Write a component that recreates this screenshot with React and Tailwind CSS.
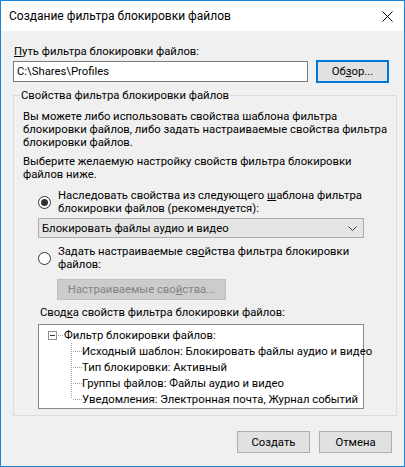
import React from 'react';

const Radio = ({ checked }) => (
  <div className="w-[13px] h-[13px] shrink-0 rounded-full border border-[#333333] bg-white flex items-center justify-center">
    {checked && <div className="w-[7px] h-[7px] rounded-full bg-[#333333]" />}
  </div>
);

const WinButton = ({ children, primary, disabled, className = '' }) => (
  <div
    className={
      'flex items-center justify-center ' +
      (disabled
        ? 'bg-[#cccccc] border border-[#bfbfbf] text-[#838383] '
        : primary
        ? 'bg-[#e1e1e1] border-2 border-[#0078d7] '
        : 'bg-[#e1e1e1] border border-[#adadad] ') +
      className
    }
  >
    {children}
  </div>
);

const Branch = ({ last }) => (
  <svg width="11" height="16" className="shrink-0" shapeRendering="crispEdges">
    <line x1="0.5" y1="0" x2="0.5" y2={last ? 8 : 16} stroke="#a0a0a0" strokeDasharray="1 1" />
    <line x1="2" y1="8.5" x2="11" y2="8.5" stroke="#a0a0a0" strokeDasharray="1 1" />
  </svg>
);

const App = () => {
  const children = [
    'Исходный шаблон: Блокировать файлы аудио и видео',
    'Тип блокировки: Активный',
    'Группы файлов: Файлы аудио и видео',
    'Уведомления: Электронная почта, Журнал событий',
  ];

  return (
    <div className="w-[405px] h-[467px] border border-[#1883d7] bg-[#f0f0f0] flex flex-col font-['Roboto','Liberation_Sans',sans-serif] text-[11.3px] leading-[13px] text-black">
      <div className="h-[30px] shrink-0 bg-white flex items-center justify-between pl-[8px] pr-[11px]">
        <span className="whitespace-nowrap text-[12px]">Создание фильтра блокировки файлов</span>
        <svg width="11" height="11" viewBox="0 0 11 11">
          <path d="M0.5 0.5 L10.5 10.5 M10.5 0.5 L0.5 10.5" stroke="#000" strokeWidth="1" />
        </svg>
      </div>

      <div className="flex flex-col px-[12px]">
        <div className="mt-[14px] pl-[1px] whitespace-nowrap">
          <u>П</u>уть фильтра блокировки файлов:
        </div>
        <div className="mt-[2px] flex items-center gap-[8px]">
          <div className="w-[295px] h-[21px] bg-white border border-[#7a7a7a] flex items-center pl-[3px] whitespace-nowrap">
            C:\Shares\Profiles
          </div>
          <WinButton primary className="w-[73px] h-[23px]">
            Об<u>з</u>ор...
          </WinButton>
        </div>

        <fieldset className="mt-[6px] border border-[#dcdcdc] px-[9px] pt-[8px] pb-[6px]">
          <legend className="-ml-[3px] px-[1px] whitespace-nowrap">Свойства фильтра блокировки файлов</legend>
          <div className="whitespace-nowrap">
            Вы можете либо использовать свойства шаблона фильтра
            <br />
            блокировки файлов, либо задать настраиваемые свойства фильтра
            <br />
            блокировки файлов.
          </div>
          <div className="mt-[6px] whitespace-nowrap">
            Выберите желаемую настройку свойств фильтра блокировки
            <br />
            файлов ниже.
          </div>

          <div className="mt-[8px] ml-[15px] flex items-center gap-[7px]">
            <Radio checked />
            <div className="whitespace-nowrap">
              Наследовать свойства из следующего <u>ш</u>аблона фильтра
              <br />
              блокировки файлов (рекомендуется):
            </div>
          </div>

          <div className="mt-[3px] ml-[15px] w-[326px] h-[20px] bg-[#e5e5e5] border border-[#acacac] flex items-center justify-between pl-[3px] pr-[6px]">
            <span className="whitespace-nowrap">Блокировать файлы аудио и видео</span>
            <svg width="9" height="5" viewBox="0 0 9 5">
              <path d="M0.5 0.5 L4.5 4.5 L8.5 0.5" fill="none" stroke="#333" strokeWidth="1" />
            </svg>
          </div>

          <div className="mt-[7px] ml-[15px] flex items-center gap-[7px]">
            <Radio />
            <div className="whitespace-nowrap">
              Задать настраиваемые св<u>о</u>йства фильтра блокировки
              <br />
              файлов:
            </div>
          </div>

          <WinButton disabled className="mt-[8px] ml-[34px] w-[169px] h-[21px] whitespace-nowrap">
            Настраиваемые сво<u>й</u>ства...
          </WinButton>

          <div className="mt-[6px] ml-[17px] whitespace-nowrap">
            Свод<u>к</u>а свойств фильтра блокировки файлов:
          </div>

          <div className="mt-[5px] ml-[15px] w-[326px] h-[85px] bg-white border border-[#828790] pt-[2px]">
            <div className="h-[16px] flex items-center pl-[9px]">
              <div className="w-[9px] h-[9px] border border-[#919191] bg-white flex items-center justify-center shrink-0">
                <div className="w-[5px] h-[1px] bg-[#333]" />
              </div>
              <svg width="7" height="16" className="shrink-0" shapeRendering="crispEdges">
                <line x1="1" y1="8.5" x2="7" y2="8.5" stroke="#a0a0a0" strokeDasharray="1 1" />
              </svg>
              <span className="whitespace-nowrap">Фильтр блокировки файлов:</span>
            </div>
            {children.map((text, i) => (
              <div key={i} className="h-[16px] flex items-center pl-[32px]">
                <Branch last={i === children.length - 1} />
                <span className="whitespace-nowrap">{text}</span>
              </div>
            ))}
          </div>
        </fieldset>

        <div className="mt-[15px] flex justify-end gap-[9px]">
          <WinButton className="w-[73px] h-[22px]">Создать</WinButton>
          <WinButton className="w-[73px] h-[22px]">Отмена</WinButton>
        </div>
      </div>
    </div>
  );
};

export default App;
